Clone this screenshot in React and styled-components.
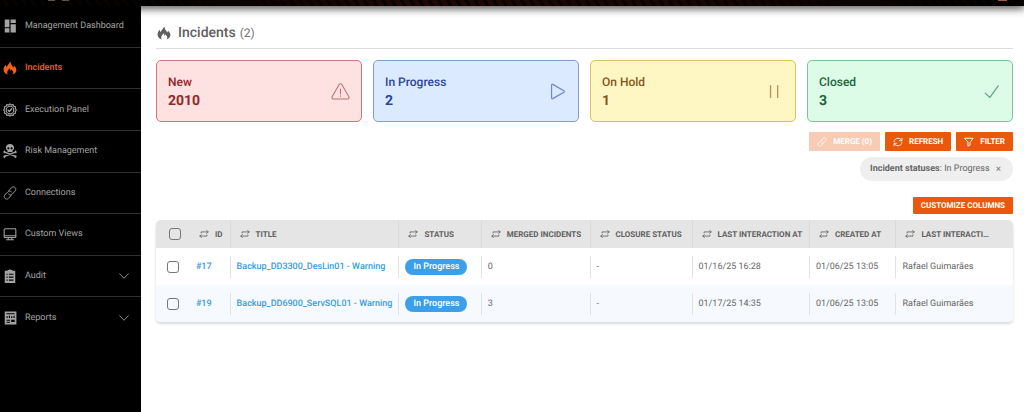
// App.jsx

import React from 'react';
import styled, { createGlobalStyle } from 'styled-components';

const svgProps = {
    viewBox: '0 0 24 24',
    fill: 'none',
    stroke: 'currentColor',
    strokeLinecap: 'round',
    strokeLinejoin: 'round',
    'aria-hidden': true,
};

const DashboardIcon = () => (
    <svg {...svgProps} fill="currentColor" stroke="none">
        <path d="M3 1h8v13H3zM3 16h8v7H3zM13 1h9v6h-9zM13 9h9v14h-9z" />
    </svg>
);

const FlameIcon = () => (
    <svg {...svgProps} fill="currentColor" stroke="none">
        <path d="M8 23C3.500 21.500 1 18.500 1 14.500c0-3.500 2-5.500 3.500-8 .9 1.500 1 2.500 1.200 4C8.500 8 9.500 4.500 13 1c-.3 3.500 1 5 2.700 7 1 1.200 1.500 2 1.600 3.200.9-.8 1.300-1.700 1.500-3.200C21.500 10.500 23 12.500 23 15.500c0 3.500-2.500 6.200-7 7.500 1.500-1.500 2-3 1.300-4.800-.6-1.600-2-2.300-2.600-4.200-1 .6-1.400 1.700-1.300 3-1.200-1-1.500-2.700-1.100-4.500-3 1.800-4.500 4-5 6.200-.3 1.700 0 3 .7 4.300z" />
    </svg>
);

const GearIcon = () => (
    <svg {...svgProps} strokeWidth="2">
        <path d="M12 1.500l2.300 2 3-.8 1.200 2.800 3 1-.4 3.100L23 12l-1.900 2.400.4 3.100-3 1-1.200 2.800-3-.8-2.300 2-2.300-2-3 .8-1.200-2.800-3-1 .4-3.100L1 12l1.900-2.400-.4-3.100 3-1 1.200-2.800 3 .8z" />
        <circle cx="12" cy="12" r="6.500" />
        <path d="M9 12.500l2 2 4-4.500" strokeWidth="2.500" />
    </svg>
);

const SkullIcon = () => (
    <svg {...svgProps} strokeWidth="2.600">
        <path fill="currentColor" stroke="none" fillRule="evenodd" d="M12 0c-4.200 0-7 2.700-7 6.300 0 2.200 1 3.700 2.700 4.700v2.500h8.600V11C18 10 19 8.500 19 6.300 19 2.700 16.200 0 12 0zM9.200 5.500a1.900 1.900 0 1 1 0 3.800 1.900 1.900 0 0 1 0-3.800zm5.600 0a1.900 1.900 0 1 1 0 3.800 1.900 1.900 0 0 1 0-3.800z" />
        <path d="M2 13.500l20 8M22 13.500l-20 8M2.500 12.500l-.5 2M21.500 12.500l.5 2M2.500 23l-.5-2M21.500 23l.5-2" />
    </svg>
);

const LinkIcon = () => (
    <svg {...svgProps} strokeWidth="1.600">
        <path d="M10 8l4.500-5c2-2 4.500-1.800 6.200-.2 1.700 1.700 1.700 4.200 0 6l-5 5.200c-1.800 1.800-4.400 1.600-6 0" />
        <path d="M14 16l-4.500 5c-2 2-4.500 1.800-6.200.2-1.700-1.700-1.700-4.200 0-6l5-5.200c1.800-1.800 4.400-1.600 6 0" />
    </svg>
);

const MonitorIcon = () => (
    <svg {...svgProps} strokeWidth="1.800">
        <rect x="2" y="3" width="20" height="15" rx="1.500" />
        <path d="M2 15h20M9 18v3M15 18v3M6 22h12" />
    </svg>
);

const ClipboardIcon = () => (
    <svg {...svgProps}>
        <path fill="currentColor" stroke="none" fillRule="evenodd" d="M3 3h5V1.500h2.500L12 0l1.500 1.500H16V3h5v21H3zM6 8h2v2H6zm4 0h8v2h-8zm-4 5h2v2H6zm4 0h8v2h-8zm-4 5h2v2H6zm4 0h8v2h-8z" />
    </svg>
);

const ReportIcon = () => (
    <svg {...svgProps}>
        <path fill="currentColor" stroke="none" fillRule="evenodd" d="M3 1h20v22H3zM6 4h14v1.500H6zm0 5h2v3H6zm4-1h2v4h-2zm4 1h2v3h-2zm4-1h2v4h-2zM6 15h6v1.500H6zm8 0h6v4h-6zm-8 3.500h6V20H6z" />
    </svg>
);

const ChevronIcon = () => (
    <svg {...svgProps} strokeWidth="2">
        <path d="M1.500 6.500L12 17.500 22.500 6.500" />
    </svg>
);

const AlertIcon = () => (
    <svg {...svgProps} strokeWidth="1.300">
        <path d="M10.300 3.200L1.400 18.500c-.8 1.500.1 3 1.700 3h17.800c1.600 0 2.500-1.500 1.700-3L13.700 3.200c-.8-1.300-2.600-1.300-3.400 0zM12 9v6M12 17.500v.5" />
    </svg>
);

const PlayIcon = () => (
    <svg {...svgProps} strokeWidth="1.500">
        <path d="M4.500 4v16c0 1 .8 1.400 1.600 1L20 13c.8-.5.800-1.500 0-2L6.100 3c-.8-.4-1.600 0-1.600 1z" />
    </svg>
);

const PauseIcon = () => (
    <svg {...svgProps} strokeWidth="1.700">
        <path d="M7 4.500v15M16 4.500v15" />
    </svg>
);

const CheckIcon = () => (
    <svg {...svgProps} strokeWidth="1.500">
        <path d="M4 14l6 5.500L20.500 5" />
    </svg>
);

const RefreshIcon = () => (
    <svg {...svgProps} strokeWidth="2">
        <path d="M2.500 11C3 6 7 3 12 3c4 0 7 2 8.500 5.500M21.500 3v6h-6M21.500 13c-.5 5-4.500 8-9.500 8-4 0-7-2-8.500-5.500M2.500 21v-6h6" />
    </svg>
);

const FunnelIcon = () => (
    <svg {...svgProps} strokeWidth="2.200">
        <path d="M2 3h20l-7.500 10v6.500L9.500 22v-9z" />
    </svg>
);

const SortIcon = () => (
    <svg {...svgProps} strokeWidth="2">
        <path d="M5 9.500V7h17M18.500 3.500L22 7l-3.500 3.500M19 14.500V17H2M5.500 13.500L2 17l3.500 3.500" />
    </svg>
);

const menu = [
    { label: 'Management Dashboard', icon: DashboardIcon },
    { label: 'Incidents', icon: FlameIcon, active: true },
    { label: 'Execution Panel', icon: GearIcon },
    { label: 'Risk Management', icon: SkullIcon },
    { label: 'Connections', icon: LinkIcon },
    { label: 'Custom Views', icon: MonitorIcon },
    { label: 'Audit', icon: ClipboardIcon, group: true },
    { label: 'Reports', icon: ReportIcon, group: true },
];

const cards = [
    { label: 'New', count: 2010, icon: AlertIcon, bg: '#fee2e2', line: '#cf7480', color: '#942626' },
    { label: 'In Progress', count: 2, icon: PlayIcon, bg: '#dbeafe', line: '#7f9fcb', color: '#2b459b' },
    { label: 'On Hold', count: 1, icon: PauseIcon, bg: '#fef7c3', line: '#d8c35c', color: '#875518' },
    { label: 'Closed', count: 3, icon: CheckIcon, bg: '#dcfce7', line: '#7cc49a', color: '#1b653a' },
];

const columns = [
    { label: 'ID', width: '4.4%' },
    { label: 'TITLE', width: '19.7%' },
    { label: 'STATUS', width: '9.6%' },
    { label: 'MERGED INCIDENTS', width: '12.7%' },
    { label: 'CLOSURE STATUS', width: '11.9%' },
    { label: 'LAST INTERACTION AT', width: '13.7%' },
    { label: 'CREATED AT', width: '10.1%' },
    { label: 'LAST INTERACTI…', width: '13.6%' },
];

const incidents = [
    { id: 17, title: 'Backup_DD3300_DesLin01 - Warning', merged: 0, last: '01/16/25 16:28', created: '01/06/25 13:05' },
    { id: 19, title: 'Backup_DD6900_ServSQL01 - Warning', merged: 3, last: '01/17/25 14:35', created: '01/06/25 13:05' },
];

const App = () => {
    return (
        <>
            <GlobalStyle />
            <TopBar>
                <LogoEdge />
                <AvatarEdge />
            </TopBar>
            <Layout>
                <Sidebar>
                    <Menu>
                        {menu.map(({ label, icon: Icon, active, group }) => (
                            <MenuItem key={label}>
                                <MenuLink href="#" $active={active}>
                                    <Icon />
                                    <span>{label}</span>
                                    {group && <Chevron><ChevronIcon /></Chevron>}
                                </MenuLink>
                            </MenuItem>
                        ))}
                    </Menu>
                </Sidebar>
                <Main>
                    <PageHeader>
                        <FlameIcon />
                        <h1>Incidents</h1>
                        <span>(2)</span>
                    </PageHeader>
                    <Cards>
                        {cards.map(({ label, count, icon: Icon, bg, line, color }) => (
                            <Card key={label} $bg={bg} $line={line} $color={color}>
                                <div>
                                    <CardLabel>{label}</CardLabel>
                                    <CardCount>{count}</CardCount>
                                </div>
                                <Icon />
                            </Card>
                        ))}
                    </Cards>
                    <Toolbar>
                        <Button disabled><LinkIcon />MERGE (0)</Button>
                        <Button><RefreshIcon />REFRESH</Button>
                        <Button><FunnelIcon />FILTER</Button>
                    </Toolbar>
                    <Filters>
                        <Chip>
                            <span><b>Incident statuses</b>: In Progress</span>
                            <button aria-label="Remove filter">×</button>
                        </Chip>
                    </Filters>
                    <TableActions>
                        <SmallButton>CUSTOMIZE COLUMNS</SmallButton>
                    </TableActions>
                    <Table>
                        <colgroup>
                            <col />
                            {columns.map((c) => <Col key={c.label} $width={c.width} />)}
                        </colgroup>
                        <thead>
                            <tr>
                                <CheckHead><Checkbox type="checkbox" aria-label="Select all" /></CheckHead>
                                {columns.map((c) => (
                                    <Th key={c.label}>
                                        <ThContent>
                                            <SortIcon />
                                            <span>{c.label}</span>
                                        </ThContent>
                                    </Th>
                                ))}
                            </tr>
                        </thead>
                        <tbody>
                            {incidents.map((row) => (
                                <Row key={row.id}>
                                    <CheckCell><Checkbox type="checkbox" aria-label={`Select #${row.id}`} /></CheckCell>
                                    <Td><a href="#">#{row.id}</a></Td>
                                    <Td><a href="#">{row.title}</a></Td>
                                    <Td><Status>In Progress</Status></Td>
                                    <Td>{row.merged}</Td>
                                    <Td>-</Td>
                                    <Td>{row.last}</Td>
                                    <Td>{row.created}</Td>
                                    <Td>Rafael Guimarães</Td>
                                </Row>
                            ))}
                        </tbody>
                    </Table>
                </Main>
            </Layout>
        </>
    );
};

const GlobalStyle = createGlobalStyle`
    * {
        box-sizing: border-box;
    }
    body {
        margin: 0;
        background: #fff;
        color: #666;
        font-family: Roboto, sans-serif;
        font-size: 9px;
        text-rendering: geometricPrecision;
    }
    #root {
        min-height: 100vh;
        display: flex;
        flex-direction: column;
    }
    a {
        text-decoration: none;
    }
    button {
        text-rendering: inherit;
    }
    svg {
        flex-shrink: 0;
    }
`;

const TopBar = styled.header`
    height: 6px;
    display: flex;
    justify-content: space-between;
    padding: 0 17px 0 48px;
    background: repeating-linear-gradient(60deg, transparent 0 5px, #0a0201 5px 8px),
        linear-gradient(90deg, #000 14%, #1e0803 40%, #160602 70%, #000 95%);
    box-shadow: 0 1px 8px 1px rgba(0, 0, 0, 0.8);
    z-index: 1;
`;

const LogoEdge = styled.span`
    width: 21px;
    height: 1px;
    border-left: 7px solid #555;
    border-right: 7px solid #555;
`;

const AvatarEdge = styled.span`
    width: 9px;
    height: 1px;
    background: #a65a48;
`;

const Layout = styled.div`
    flex: 1;
    display: flex;
`;

const Sidebar = styled.nav`
    width: 141px;
    flex-shrink: 0;
    background: #000;
    z-index: 2;
`;

const Menu = styled.ul`
    display: grid;
    grid-auto-rows: 1fr;
    height: 333px;
    margin: 0;
    padding: 0;
    list-style: none;
`;

const MenuItem = styled.li`
    display: flex;
    border-bottom: 1px solid #303030;

    &:last-child {
        border-bottom: 0;
    }
`;

const MenuLink = styled.a`
    flex: 1;
    display: flex;
    align-items: center;
    gap: 8px;
    padding: 0 12px 0 3px;
    color: ${(p) => (p.$active ? '#f4611b' : '#a3a3a3')};
    font-weight: ${(p) => (p.$active ? 500 : 400)};
    white-space: nowrap;

    svg {
        width: 14px;
        height: 14px;
    }
`;

const Chevron = styled.span`
    display: flex;
    margin-left: auto;

    svg {
        width: 10px;
        height: 10px;
    }
`;

const Main = styled.main`
    flex: 1;
    min-width: 0;
    padding: 12px 11px 12px 15px;
`;

const PageHeader = styled.div`
    display: flex;
    align-items: center;
    height: 31px;
    border-bottom: 1px solid #ddd;
    color: #606060;

    svg {
        width: 14px;
        height: 16px;
        margin: 0 7px 0 1px;
    }
    h1 {
        margin: 0 4px 0 0;
        font-size: 14px;
        font-weight: 500;
    }
    span {
        font-size: 12px;
        color: #777;
    }
`;

const Cards = styled.section`
    display: grid;
    grid-template-columns: repeat(4, 1fr);
    gap: 11px;
    margin-top: 11px;
`;

const Card = styled.div`
    display: flex;
    align-items: center;
    justify-content: space-between;
    padding: 11px 11px 10px;
    border: 1px solid ${(p) => p.$line};
    border-radius: 5px;
    background: ${(p) => p.$bg};
    color: ${(p) => p.$color};

    svg {
        width: 19px;
        height: 19px;
        opacity: 0.6;
    }
`;

const CardLabel = styled.div`
    font-size: 12px;
    line-height: 20px;
    font-weight: 500;
`;

const CardCount = styled.div`
    font-size: 14px;
    line-height: 19px;
    font-weight: 700;
`;

const Toolbar = styled.div`
    display: flex;
    justify-content: flex-end;
    gap: 5px;
    margin-top: 10px;
`;

const Button = styled.button`
    display: flex;
    align-items: center;
    gap: 6px;
    height: 19px;
    padding: 0 8px;
    border: 0;
    border-radius: 1px;
    background: #ea580c;
    color: #fff;
    font-family: inherit;
    font-size: 8px;
    font-weight: 700;

    &:disabled {
        background: #f8cbb5;
    }
    svg {
        width: 10px;
        height: 10px;
    }
`;

const SmallButton = styled(Button)`
    height: 17px;
`;

const Filters = styled.div`
    display: flex;
    justify-content: flex-end;
    margin-top: 6px;
`;

const Chip = styled.div`
    display: flex;
    align-items: center;
    gap: 4px;
    height: 24px;
    padding: 0 10px;
    border-radius: 12px;
    background: #efefef;

    b {
        font-weight: 700;
    }
    button {
        padding: 0 2px;
        border: 0;
        background: none;
        color: #777;
        font-family: inherit;
        font-size: 10px;
    }
`;

const TableActions = styled.div`
    display: flex;
    justify-content: flex-end;
    margin: 16px 0 6px;
`;

const Table = styled.table`
    width: 100%;
    table-layout: fixed;
    border-collapse: separate;
    border-spacing: 0;
    border-radius: 5px;
    overflow: hidden;
    box-shadow: 0 2px 3px rgba(0, 0, 0, 0.15);
`;

const Col = styled.col`
    width: ${(p) => p.$width};
`;

const Th = styled.th`
    height: 28px;
    padding: 0 0 0 9px;
    background: #e5e5e5;
    border-right: 1px solid #dadada;
    color: #606060;
    font-size: 8px;
    font-weight: 700;
    text-align: left;

    &:nth-child(2) {
        padding: 0 0 0 6px;
    }
    &:last-child {
        border-right: 0;
    }
`;

const ThContent = styled.div`
    display: flex;
    align-items: center;
    gap: 6px;

    svg {
        width: 10px;
        height: 10px;
    }
    span {
        white-space: nowrap;
    }
`;

const CheckHead = styled.th`
    padding: 0 0 0 13px;
    background: #e5e5e5;
    text-align: left;
`;

const CheckCell = styled.td`
    padding: 0 0 0 11px;
`;

const Checkbox = styled.input`
    appearance: none;
    display: block;
    width: 12px;
    height: 12px;
    margin: 0;
    border: 1px solid #777;
    border-radius: 3px;
`;

const Td = styled.td`
    height: 37px;
    padding: 0 0 0 6px;
    background: linear-gradient(#e2e2e2, #e2e2e2) right center / 1px 22px no-repeat;
    white-space: nowrap;

    &:nth-child(2) {
        padding-left: 3px;
    }
    &:last-child {
        background: none;
    }
    a {
        color: #3b9be0;
        font-weight: 500;
    }
`;

const Row = styled.tr`
    background: #fff;

    &:nth-child(even) {
        background: #f6f9fd;
    }
`;

const Status = styled.span`
    display: inline-block;
    padding: 0 8px;
    border-radius: 8px;
    background: #3b9fe9;
    color: #fff;
    font-weight: 500;
    line-height: 16px;
`;

export default App;
